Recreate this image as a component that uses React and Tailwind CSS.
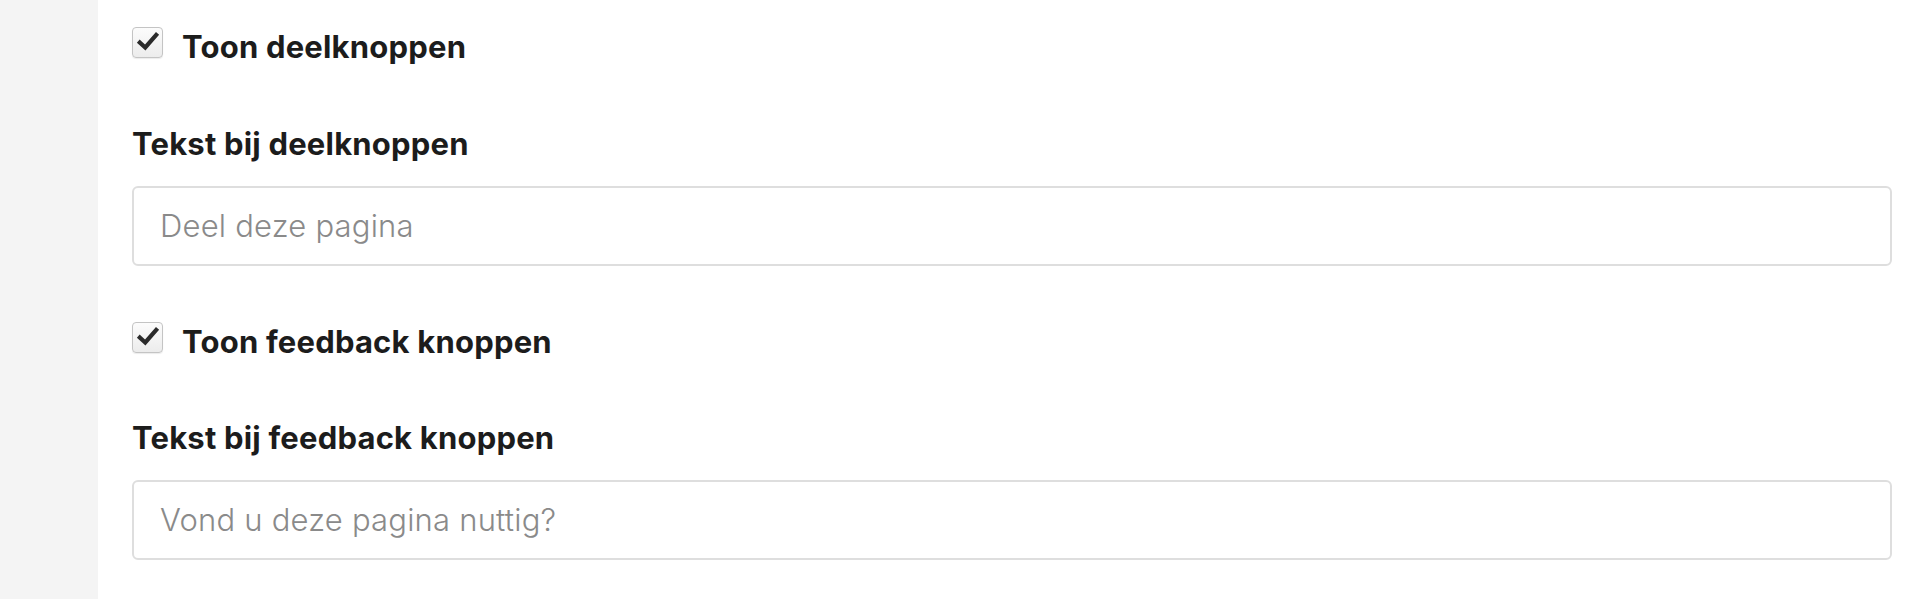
import React from "react";

function Check() {
  return (
    <div className="w-[31px] h-[31px] shrink-0 rounded-[4px] border border-[#c4c4c4] bg-gradient-to-b from-[#fcfcfc] to-[#ececec] shadow-[0_1px_1px_rgba(0,0,0,0.08)] flex items-center justify-center">
      <svg width="24" height="24" viewBox="0 0 22 22">
        <path d="M3.5 11.5 L8.5 16 L18.5 4.5" fill="none" stroke="#2b2b2b" strokeWidth="3.8" strokeLinecap="square" strokeLinejoin="miter" />
      </svg>
    </div>
  );
}

function CheckRow({ label }) {
  return (
    <div className="flex items-center gap-[19px] h-[40px]">
      <div className="-mt-[10px]"><Check /></div>
      <span className="text-[31px] leading-[40px] font-bold tracking-[0.2px] text-[#1c1c1c]">{label}</span>
    </div>
  );
}

function Field({ label, placeholder }) {
  return (
    <div className="flex flex-col">
      <label className="text-[31px] leading-[40px] font-bold tracking-[0.2px] text-[#1c1c1c]">{label}</label>
      <div className="mt-[22px] h-[80px] rounded-[6px] border-2 border-[#dedede] bg-white flex items-center pl-[26px]">
        <span className="text-[31px] font-light tracking-[0.2px] text-[#8a8a8a] leading-[40px]">{placeholder}</span>
      </div>
    </div>
  );
}

export default function App() {
  return (
    <div className="flex w-[1920px] h-[599px] overflow-hidden" style={{ fontFamily: "Inter, 'Liberation Sans', sans-serif" }}>
      <div className="w-[98px] shrink-0 bg-[#f4f4f4]" />
      <div className="flex-1 bg-white pl-[34px] pr-[28px] pt-[27px] flex flex-col">
        <CheckRow label="Toon deelknoppen" />
        <div className="mt-[57px]">
          <Field label="Tekst bij deelknoppen" placeholder="Deel deze pagina" />
        </div>
        <div className="mt-[56px]">
          <CheckRow label="Toon feedback knoppen" />
        </div>
        <div className="mt-[56px]">
          <Field label="Tekst bij feedback knoppen" placeholder="Vond u deze pagina nuttig?" />
        </div>
      </div>
    </div>
  );
}
